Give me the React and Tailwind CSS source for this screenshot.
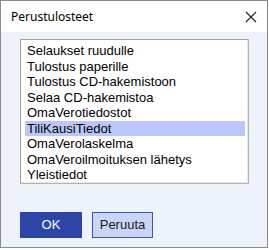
import React from "react";

const items = [
  "Selaukset ruudulle",
  "Tulostus paperille",
  "Tulostus CD-hakemistoon",
  "Selaa CD-hakemistoa",
  "OmaVerotiedostot",
  "TiliKausiTiedot",
  "OmaVerolaskelma",
  "OmaVeroilmoituksen lähetys",
  "Yleistiedot",
];

export default function App() {
  return (
    <div className="w-[269px] h-[250px] bg-white">
      <div className="w-[268px] h-[248px] border border-[#8a8a8a] flex flex-col">
        <div className="h-[31px] bg-white flex items-center justify-between pl-[10px] pr-[9px]">
          <span className="text-[12px] text-black" style={{ fontFamily: '"Noto Sans", sans-serif' }}>
            Perustulosteet
          </span>
          <svg width="12" height="12" viewBox="0 0 12 12" className="mr-[1px]">
            <path d="M1 1 L11 11 M11 1 L1 11" stroke="#222" strokeWidth="1.1" fill="none" />
          </svg>
        </div>
        <div className="flex-1 bg-[#eef2fb] pl-[19px] pt-[7px]">
          <div className="w-[229px] h-[145px] bg-white border border-t-[#a0a0a0] border-l-[#a0a0a0] border-r-[#b4b4b4] border-b-[#b4b4b4] shadow-[inset_-1px_-1px_0_#e6e6e6,inset_1px_1px_0_#ffffff] pt-[3px] pl-[4px] pr-[3px]">
            {items.map((t, i) => (
              <div
                key={t}
                className={
                  "h-[15.5px] flex items-center pl-[2px] text-[13px] leading-none text-black " +
                  (i === 5 ? "bg-[#b9c8f8]" : "")
                }
                style={{ fontFamily: '"Liberation Sans", Arial, sans-serif' }}
              >
                {t}
              </div>
            ))}
          </div>
          <div className="flex gap-[10px] mt-[28px]">
            <button
              className="w-[62px] h-[26px] bg-[#2c46a8] text-white text-[13px] flex items-center justify-center"
              style={{ fontFamily: '"Liberation Sans", Arial, sans-serif' }}
            >
              OK
            </button>
            <button
              className="w-[61px] h-[26px] bg-[#c9d5f2] border border-[#3a56b0] text-[#1a1a2a] text-[13px] flex items-center justify-center"
              style={{ fontFamily: '"Liberation Sans", Arial, sans-serif' }}
            >
              Peruuta
            </button>
          </div>
        </div>
      </div>
    </div>
  );
}
